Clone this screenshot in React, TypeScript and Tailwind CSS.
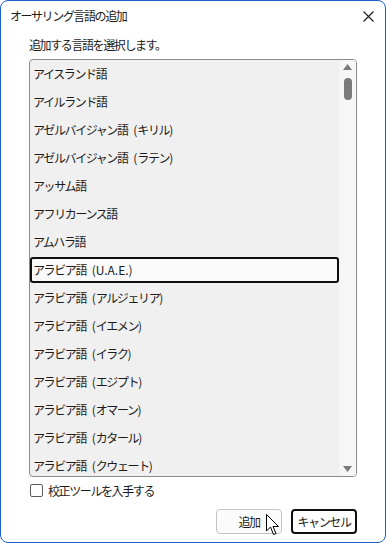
import React from "react";

const items = [
  "アイスランド語",
  "アイルランド語",
  "アゼルバイジャン語 (キリル)",
  "アゼルバイジャン語 (ラテン)",
  "アッサム語",
  "アフリカーンス語",
  "アムハラ語",
  "アラビア語 (U.A.E.)",
  "アラビア語 (アルジェリア)",
  "アラビア語 (イエメン)",
  "アラビア語 (イラク)",
  "アラビア語 (エジプト)",
  "アラビア語 (オマーン)",
  "アラビア語 (カタール)",
  "アラビア語 (クウェート)",
];

const font = { fontFamily: '"Noto Sans CJK JP", "Noto Sans", sans-serif' };

function T({ s }: { s: string }) {
  const parts = s.split(/([\x20-\x7e]+)/).filter((p) => p.length > 0);
  return (
    <>
      {parts.map((p, i) =>
        /^[\x20-\x7e]+$/.test(p) ? (
          <span
            key={i}
            className={
              p.startsWith(" ")
                ? "tracking-normal whitespace-pre pl-[3px]"
                : "tracking-normal whitespace-pre"
            }
          >
            {p}
          </span>
        ) : (
          <span key={i} className="tracking-[-1.4px]">
            {p}
          </span>
        )
      )}
    </>
  );
}

export default function App() {
  return (
    <div className="w-[386px] h-[543px] bg-white">
      <div
        className="relative w-[386px] h-[543px] border border-[#1d5fc9] rounded-[8px] bg-white flex flex-col text-[12px] text-[#1b1b1b] overflow-hidden"
        style={font}
      >
        <div className="h-[29px] flex items-center justify-between pl-[9px] pr-[11px]">
          <span className="leading-none">
            <T s="オーサリング言語の追加" />
          </span>
          <svg width="11" height="11" viewBox="0 0 11 11" className="mt-[1px]">
            <path d="M0.5 0.5 L10.5 10.5 M10.5 0.5 L0.5 10.5" stroke="#1b1b1b" strokeWidth="1.1" />
          </svg>
        </div>
        <div className="px-[28px] flex flex-col">
          <div className="h-[20px] mt-[5px] flex items-center leading-none">
            <T s="追加する言語を選択します。" />
          </div>
          <div className="mt-[4px] h-[418px] border border-[#8c8c8c] rounded-[4px] bg-[#f0f0f0] flex overflow-hidden">
            <div className="flex-1 flex flex-col overflow-hidden">
              {items.map((it, i) => (
                <div key={i} className="h-[28px] shrink-0 flex items-center">
                  {i === 7 ? (
                    <div className="h-[26px] w-full border-2 border-[#0f0f0f] rounded-[3px] bg-[#fafafa] flex items-center pl-[1px] leading-none">
                      <T s={it} />
                    </div>
                  ) : (
                    <div className="pl-[3px] leading-none">
                      <T s={it} />
                    </div>
                  )}
                </div>
              ))}
            </div>
            <div className="w-[17px] bg-[#f6f6f6] flex flex-col items-center pt-[3px] pb-[4px]">
              <svg width="9" height="6" viewBox="0 0 9 6" className="mt-[1px]">
                <path d="M4.5 0 L9 6 L0 6 Z" fill="#7a7a7a" />
              </svg>
              <div className="mt-[8px] w-[8px] h-[22px] rounded-full bg-[#7a7a7a]" />
              <div className="flex-1" />
              <svg width="9" height="6" viewBox="0 0 9 6">
                <path d="M0 0 L9 0 L4.5 6 Z" fill="#7a7a7a" />
              </svg>
            </div>
          </div>
          <div className="mt-[6px] h-[15px] flex items-center gap-[5px]">
            <div className="w-[13px] h-[13px] border border-[#5c5c5c] rounded-[2px] bg-white ml-[1px]" />
            <span className="leading-none">
              <T s="校正ツールを入手する" />
            </span>
          </div>
          <div className="mt-[11px] flex justify-end gap-[9px]">
            <div className="w-[66px] h-[25px] border border-[#c4c4c4] rounded-[4px] bg-[#fbfbfb] flex items-center justify-center leading-none">
              <T s="追加" />
            </div>
            <div className="w-[66px] h-[25px] border-2 border-[#0f0f0f] rounded-[4px] bg-white flex items-center justify-center leading-none">
              <T s="キャンセル" />
            </div>
          </div>
        </div>
        <svg
          width="14"
          height="22"
          viewBox="0 0 14 22"
          className="absolute left-[265px] top-[513px]"
        >
          <path
            d="M0.5 0.5 L0.5 17 L4.5 13 L7.5 20.5 L10 19.5 L7 12.5 L12.5 12.5 Z"
            fill="#ffffff"
            stroke="#000000"
            strokeWidth="1"
            strokeLinejoin="round"
          />
        </svg>
      </div>
    </div>
  );
}
